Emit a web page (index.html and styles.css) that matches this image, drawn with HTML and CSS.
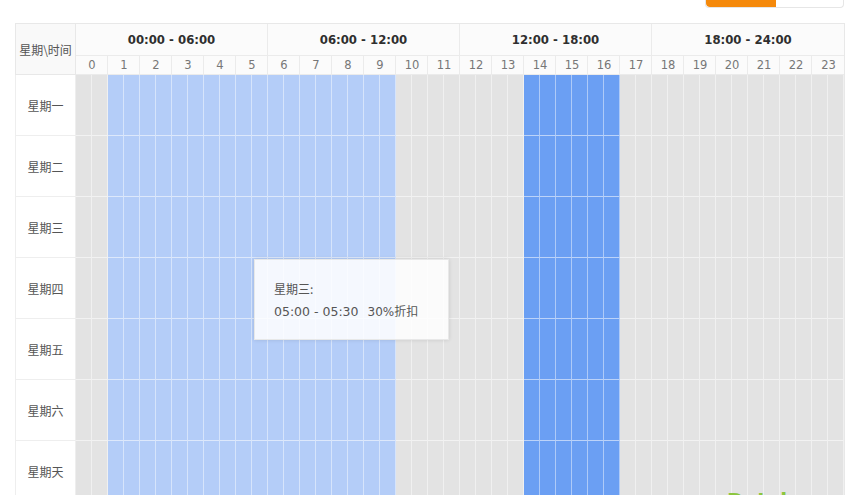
FILE: index.html
```html
<!DOCTYPE html>
<html lang="zh">
<head>
<meta charset="utf-8">
<title>时段折扣</title>
<link rel="stylesheet" href="styles.css">
</head>
<body>
<div class="topbar"><div class="progress"><div class="fill"></div></div></div>
<div class="wrap">
  <div class="sched">
    <div class="corner">星期\时间</div>
    <div class="grp">00:00 - 06:00</div>
    <div class="grp">06:00 - 12:00</div>
    <div class="grp">12:00 - 18:00</div>
    <div class="grp">18:00 - 24:00</div>
    <div class="hr">0</div><div class="hr">1</div><div class="hr">2</div><div class="hr">3</div><div class="hr">4</div><div class="hr">5</div>
    <div class="hr">6</div><div class="hr">7</div><div class="hr">8</div><div class="hr">9</div><div class="hr">10</div><div class="hr">11</div>
    <div class="hr">12</div><div class="hr">13</div><div class="hr">14</div><div class="hr">15</div><div class="hr">16</div><div class="hr">17</div>
    <div class="hr">18</div><div class="hr">19</div><div class="hr">20</div><div class="hr">21</div><div class="hr">22</div><div class="hr">23</div>

    <div class="day">星期一</div>
    <div class="c"></div><div class="c"></div>
    <div class="c l"></div><div class="c l"></div><div class="c l"></div><div class="c l"></div><div class="c l"></div><div class="c l"></div><div class="c l"></div><div class="c l"></div><div class="c l"></div><div class="c l"></div><div class="c l"></div><div class="c l"></div><div class="c l"></div><div class="c l"></div><div class="c l"></div><div class="c l"></div><div class="c l"></div><div class="c l"></div>
    <div class="c"></div><div class="c"></div><div class="c"></div><div class="c"></div><div class="c"></div><div class="c"></div><div class="c"></div><div class="c"></div>
    <div class="c d"></div><div class="c d"></div><div class="c d"></div><div class="c d"></div><div class="c d"></div><div class="c d"></div>
    <div class="c"></div><div class="c"></div><div class="c"></div><div class="c"></div><div class="c"></div><div class="c"></div><div class="c"></div><div class="c"></div><div class="c"></div><div class="c"></div><div class="c"></div><div class="c"></div><div class="c"></div><div class="c"></div>

    <div class="day">星期二</div>
    <div class="c"></div><div class="c"></div>
    <div class="c l"></div><div class="c l"></div><div class="c l"></div><div class="c l"></div><div class="c l"></div><div class="c l"></div><div class="c l"></div><div class="c l"></div><div class="c l"></div><div class="c l"></div><div class="c l"></div><div class="c l"></div><div class="c l"></div><div class="c l"></div><div class="c l"></div><div class="c l"></div><div class="c l"></div><div class="c l"></div>
    <div class="c"></div><div class="c"></div><div class="c"></div><div class="c"></div><div class="c"></div><div class="c"></div><div class="c"></div><div class="c"></div>
    <div class="c d"></div><div class="c d"></div><div class="c d"></div><div class="c d"></div><div class="c d"></div><div class="c d"></div>
    <div class="c"></div><div class="c"></div><div class="c"></div><div class="c"></div><div class="c"></div><div class="c"></div><div class="c"></div><div class="c"></div><div class="c"></div><div class="c"></div><div class="c"></div><div class="c"></div><div class="c"></div><div class="c"></div>

    <div class="day">星期三</div>
    <div class="c"></div><div class="c"></div>
    <div class="c l"></div><div class="c l"></div><div class="c l"></div><div class="c l"></div><div class="c l"></div><div class="c l"></div><div class="c l"></div><div class="c l"></div><div class="c l"></div><div class="c l"></div><div class="c l"></div><div class="c l"></div><div class="c l"></div><div class="c l"></div><div class="c l"></div><div class="c l"></div><div class="c l"></div><div class="c l"></div>
    <div class="c"></div><div class="c"></div><div class="c"></div><div class="c"></div><div class="c"></div><div class="c"></div><div class="c"></div><div class="c"></div>
    <div class="c d"></div><div class="c d"></div><div class="c d"></div><div class="c d"></div><div class="c d"></div><div class="c d"></div>
    <div class="c"></div><div class="c"></div><div class="c"></div><div class="c"></div><div class="c"></div><div class="c"></div><div class="c"></div><div class="c"></div><div class="c"></div><div class="c"></div><div class="c"></div><div class="c"></div><div class="c"></div><div class="c"></div>

    <div class="day">星期四</div>
    <div class="c"></div><div class="c"></div>
    <div class="c l"></div><div class="c l"></div><div class="c l"></div><div class="c l"></div><div class="c l"></div><div class="c l"></div><div class="c l"></div><div class="c l"></div><div class="c l"></div><div class="c l"></div><div class="c l"></div><div class="c l"></div><div class="c l"></div><div class="c l"></div><div class="c l"></div><div class="c l"></div><div class="c l"></div><div class="c l"></div>
    <div class="c"></div><div class="c"></div><div class="c"></div><div class="c"></div><div class="c"></div><div class="c"></div><div class="c"></div><div class="c"></div>
    <div class="c d"></div><div class="c d"></div><div class="c d"></div><div class="c d"></div><div class="c d"></div><div class="c d"></div>
    <div class="c"></div><div class="c"></div><div class="c"></div><div class="c"></div><div class="c"></div><div class="c"></div><div class="c"></div><div class="c"></div><div class="c"></div><div class="c"></div><div class="c"></div><div class="c"></div><div class="c"></div><div class="c"></div>

    <div class="day">星期五</div>
    <div class="c"></div><div class="c"></div>
    <div class="c l"></div><div class="c l"></div><div class="c l"></div><div class="c l"></div><div class="c l"></div><div class="c l"></div><div class="c l"></div><div class="c l"></div><div class="c l"></div><div class="c l"></div><div class="c l"></div><div class="c l"></div><div class="c l"></div><div class="c l"></div><div class="c l"></div><div class="c l"></div><div class="c l"></div><div class="c l"></div>
    <div class="c"></div><div class="c"></div><div class="c"></div><div class="c"></div><div class="c"></div><div class="c"></div><div class="c"></div><div class="c"></div>
    <div class="c d"></div><div class="c d"></div><div class="c d"></div><div class="c d"></div><div class="c d"></div><div class="c d"></div>
    <div class="c"></div><div class="c"></div><div class="c"></div><div class="c"></div><div class="c"></div><div class="c"></div><div class="c"></div><div class="c"></div><div class="c"></div><div class="c"></div><div class="c"></div><div class="c"></div><div class="c"></div><div class="c"></div>

    <div class="day">星期六</div>
    <div class="c"></div><div class="c"></div>
    <div class="c l"></div><div class="c l"></div><div class="c l"></div><div class="c l"></div><div class="c l"></div><div class="c l"></div><div class="c l"></div><div class="c l"></div><div class="c l"></div><div class="c l"></div><div class="c l"></div><div class="c l"></div><div class="c l"></div><div class="c l"></div><div class="c l"></div><div class="c l"></div><div class="c l"></div><div class="c l"></div>
    <div class="c"></div><div class="c"></div><div class="c"></div><div class="c"></div><div class="c"></div><div class="c"></div><div class="c"></div><div class="c"></div>
    <div class="c d"></div><div class="c d"></div><div class="c d"></div><div class="c d"></div><div class="c d"></div><div class="c d"></div>
    <div class="c"></div><div class="c"></div><div class="c"></div><div class="c"></div><div class="c"></div><div class="c"></div><div class="c"></div><div class="c"></div><div class="c"></div><div class="c"></div><div class="c"></div><div class="c"></div><div class="c"></div><div class="c"></div>

    <div class="day">星期天</div>
    <div class="c"></div><div class="c"></div>
    <div class="c l"></div><div class="c l"></div><div class="c l"></div><div class="c l"></div><div class="c l"></div><div class="c l"></div><div class="c l"></div><div class="c l"></div><div class="c l"></div><div class="c l"></div><div class="c l"></div><div class="c l"></div><div class="c l"></div><div class="c l"></div><div class="c l"></div><div class="c l"></div><div class="c l"></div><div class="c l"></div>
    <div class="c"></div><div class="c"></div><div class="c"></div><div class="c"></div><div class="c"></div><div class="c"></div><div class="c"></div><div class="c"></div>
    <div class="c d"></div><div class="c d"></div><div class="c d"></div><div class="c d"></div><div class="c d"></div><div class="c d"></div>
    <div class="c"></div><div class="c"></div><div class="c"></div><div class="c"></div><div class="c"></div><div class="c"></div><div class="c"></div><div class="c"></div><div class="c"></div><div class="c"></div><div class="c"></div><div class="c"></div><div class="c"></div><div class="c"></div>
  </div>

  <div class="tip">
    <div class="tip-line">星期三:</div>
    <div class="tip-line"><span class="tip-time">05:00 - 05:30</span><span class="tip-off">30%折扣</span></div>
  </div>
  <div class="mark">Dataku</div>
</div>
</body>
</html>
```

FILE: styles.css
```css
html, body {
  margin: 0;
  padding: 0;
  background: #fff;
}
body {
  padding: 0 6px 0 15px;
  overflow: hidden;
  font-family: "DejaVu Sans", "Noto Sans CJK SC", sans-serif;
  color: #555;
}
.topbar {
  display: flex;
  justify-content: flex-end;
  height: 8px;
  margin-bottom: 15px;
}
.progress {
  width: 139px;
  height: 8px;
  box-sizing: border-box;
  border: 1px solid #e6e6e6;
  border-top: 0;
  border-radius: 0 0 4px 4px;
  background: #fff;
  overflow: hidden;
  margin-right: 1px;
}
.fill {
  width: 70px;
  height: 100%;
  background: #f5890b;
  border-radius: 0 0 0 4px;
}
.wrap {
  position: relative;
}
.sched {
  display: grid;
  width: max-content;
  grid-template-columns: 61px repeat(48, 16px);
  grid-template-rows: 32px 19px repeat(7, 61px);
  border: 1px solid #e8e8e8;
  border-left: 0;
  border-bottom: 0;
}
.sched > div {
  box-sizing: border-box;
}
.corner {
  grid-row: span 2;
  display: flex;
  align-items: center;
  justify-content: center;
  background: #f9f9f9;
  border-left: 1px solid #e8e8e8;
  border-right: 1px solid #e8e8e8;
  border-bottom: 1px solid #e8e8e8;
  font-family: "Noto Sans CJK SC", sans-serif;
  font-size: 12px;
  color: #555;
  white-space: nowrap;
}
.grp {
  grid-column: span 12;
  display: flex;
  align-items: center;
  justify-content: center;
  background: #fbfbfb;
  border-right: 1px solid #ebebeb;
  border-bottom: 1px solid #ebebeb;
  font-family: "DejaVu Sans Condensed", "DejaVu Sans", sans-serif;
  font-weight: bold;
  font-size: 13px;
  color: #2f2f2f;
}
.grp:nth-child(5) {
  border-right: 0;
}
.hr {
  grid-column: span 2;
  display: flex;
  align-items: center;
  justify-content: center;
  padding-left: 1px;
  background: #fbfbfb;
  border-right: 1px solid #ebebeb;
  border-bottom: 1px solid #ebebeb;
  font-size: 11.5px;
  color: #777;
}
.hr:nth-child(29) {
  border-right: 0;
}
.day {
  display: flex;
  align-items: center;
  justify-content: center;
  background: #fff;
  border-left: 1px solid #eee;
  border-right: 1px solid #eee;
  border-bottom: 1px solid #eee;
  font-family: "Noto Sans CJK SC", sans-serif;
  font-size: 12px;
  color: #555;
}
.c {
  background: #e3e3e3;
  border-right: 1px solid rgba(255, 255, 255, 0.45);
  border-bottom: 1px solid rgba(255, 255, 255, 0.55);
}
.c.l {
  background: #b4cdf8;
}
.c.d {
  background: #6b9ff3;
}
.tip {
  position: absolute;
  left: 239px;
  top: 236px;
  width: 195px;
  height: 81px;
  box-sizing: border-box;
  padding: 17px 19px 0 19px;
  background: rgba(255, 255, 255, 0.86);
  border: 1px solid rgba(230, 230, 230, 0.9);
  box-shadow: 0 0 4px rgba(0, 0, 0, 0.12);
  font-size: 12px;
  color: #555;
}
.tip-line {
  line-height: 23px;
  white-space: nowrap;
}
.tip-line:first-child {
  font-family: "Noto Sans CJK SC", sans-serif;
}
.tip-time {
  font-family: "DejaVu Sans", sans-serif;
  font-size: 12.5px;
  margin-right: 9px;
}
.tip-off {
  font-size: 12px;
}
.mark {
  position: absolute;
  left: 712px;
  top: 467px;
  font-family: "DejaVu Sans", sans-serif;
  font-weight: bold;
  font-size: 20px;
  color: #8cc63e;
  line-height: 1;
}
```
